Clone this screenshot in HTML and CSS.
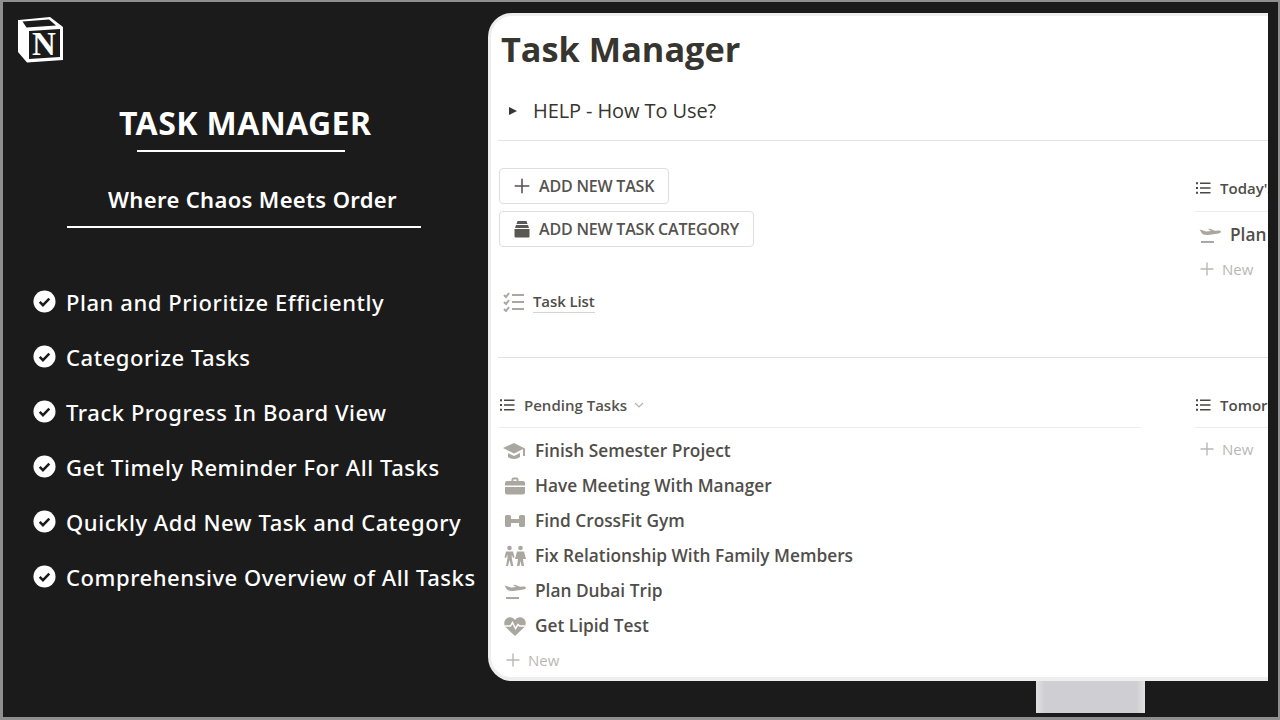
FILE: index.html
```html
<!DOCTYPE html>
<html lang="en">
<head>
<meta charset="utf-8">
<title>Task Manager</title>
<link rel="stylesheet" href="styles.css">
</head>
<body>
<svg class="defs" width="0" height="0" aria-hidden="true">
  <defs>
    <symbol id="i-check" viewBox="0 0 24 24">
      <circle cx="12" cy="12" r="11.5" fill="#fff"/>
      <path d="M7 12.4l3.4 3.4L17 9" fill="none" stroke="#1b1b1b" stroke-width="2.6"/>
    </symbol>
    <symbol id="i-list" viewBox="0 0 16 16">
      <path d="M1 2.2h2v2H1zM1 7h2v2H1zM1 11.8h2v2H1zM5 2.5h10.5v1.4H5zM5 7.3h10.5v1.4H5zM5 12.1h10.5v1.4H5z" fill="#4a4843"/>
    </symbol>
    <symbol id="i-plus" viewBox="0 0 16 16">
      <path d="M8 1.5v13M1.5 8h13" fill="none" stroke="currentColor" stroke-width="1.4"/>
    </symbol>
    <symbol id="i-plane" viewBox="0 0 24 24">
      <path d="M1.500 6.500l3 .8 3.500 1.200 5-.6-3-2 2-.2 5 2 3.500-.3c1.500 0 2.500.6 2.500 1.300 0 1-2 1.800-4 2l-9 1.200c-3 .2-6-.5-6.500-2.200z" fill="#a9a79f"/>
      <path d="M3 19h13" stroke="#a9a79f" stroke-width="2.200" fill="none"/>
    </symbol>
  </defs>
</svg>
<main class="frame">
  <section class="promo">
    <svg class="logo" viewBox="0 0 46 46" aria-hidden="true">
      <path d="M1 3 32 0l13 10v33l-36 2.500L0 35V3z" fill="#fff"/>
      <path d="M11 14 42 12v28l-31 2z" fill="#1b1b1b"/>
      <path d="M4.500 4.500 8.500 10.500 38 8.500 31 2.500z" fill="#1b1b1b"/>
      <text x="26" y="38" text-anchor="middle" class="logo-n">N</text>
    </svg>
    <h1 class="promo-title">TASK MANAGER</h1>
    <div class="rule rule-short"></div>
    <p class="promo-sub">Where Chaos Meets Order</p>
    <div class="rule rule-long"></div>
    <ul class="features">
      <li><svg class="check"><use href="#i-check"/></svg>Plan and Prioritize Efficiently</li>
      <li><svg class="check"><use href="#i-check"/></svg>Categorize Tasks</li>
      <li><svg class="check"><use href="#i-check"/></svg>Track Progress In Board View</li>
      <li><svg class="check"><use href="#i-check"/></svg>Get Timely Reminder For All Tasks</li>
      <li><svg class="check"><use href="#i-check"/></svg>Quickly Add New Task and Category</li>
      <li><svg class="check"><use href="#i-check"/></svg>Comprehensive Overview of All Tasks</li>
    </ul>
  </section>
  <section class="monitor">
    <div class="panel">
      <h2 class="page-title">Task Manager</h2>
      <div class="toggle"><span class="caret"></span>HELP - How To Use?</div>
      <hr class="divider divider-help">
      <div class="columns columns-top">
        <div class="col-left">
          <button class="btn"><svg class="btn-icon btn-plus"><use href="#i-plus"/></svg>ADD NEW TASK</button>
          <button class="btn"><svg class="btn-icon" viewBox="0 0 18 18"><path d="M4.500 1h9l1 3h-11zM3 5h12l1 3H2zM1.500 9h15v7.500a1 1 0 0 1-1 1h-13a1 1 0 0 1-1-1z" fill="#5a5852"/></svg>ADD NEW TASK CATEGORY</button>
          <div class="link-row">
            <svg class="link-icon" viewBox="0 0 22 20"><path d="M1 3l2 2 3-4M1 10l2 2 3-4M1 17l2 2 3-4" fill="none" stroke="#a9a79f" stroke-width="2"/><path d="M9 3h12M9 10h12M9 17h12" stroke="#a9a79f" stroke-width="2"/></svg>
            <span class="link-text">Task List</span>
          </div>
        </div>
        <div class="col-right">
          <div class="view-head view-head-right"><svg class="list-icon"><use href="#i-list"/></svg>Today's Tasks</div>
          <div class="task task-right"><svg class="task-icon"><use href="#i-plane"/></svg>Plan Dubai Trip</div>
          <div class="new new-right"><svg class="new-icon"><use href="#i-plus"/></svg>New</div>
        </div>
      </div>
      <hr class="divider divider-mid">
      <div class="columns">
        <div class="col-left">
          <div class="view-head"><svg class="list-icon"><use href="#i-list"/></svg>Pending Tasks<svg class="chev" viewBox="0 0 12 12"><path d="M2 4l4 4 4-4" fill="none" stroke="#b5b3ad" stroke-width="1.200"/></svg></div>
          <div class="tasks">
            <div class="task"><svg class="task-icon" viewBox="0 0 24 24"><path d="M11 4 0 9l11 5.500 9-4.500v7h2V9.500z" fill="#a9a79f"/><path d="M5 14v4c3 2.500 9 2.500 12 0v-4l-6 3z" fill="#a9a79f"/></svg>Finish Semester Project</div>
            <div class="task"><svg class="task-icon" viewBox="0 0 24 24"><path d="M8.500 7V5.500C8.500 4.200 9.500 3.500 10.500 3.500h3c1 0 2 .7 2 2V7h4.500A2 2 0 0 1 22 9v2.500H2V9a2 2 0 0 1 2-2zM10.300 7h3.400V5.400h-3.400zM2 13h20v5.500a2 2 0 0 1-2 2H4a2 2 0 0 1-2-2z" fill="#a9a79f"/></svg>Have Meeting With Manager</div>
            <div class="task"><svg class="task-icon" viewBox="0 0 24 24"><path d="M2 7.500A1.500 1.500 0 0 1 3.500 6h3A1.500 1.500 0 0 1 8 7.500v2.500h8V7.500A1.500 1.500 0 0 1 17.500 6h3A1.500 1.500 0 0 1 22 7.500v9a1.500 1.500 0 0 1-1.500 1.500h-3a1.500 1.500 0 0 1-1.500-1.500V14H8v2.500A1.500 1.500 0 0 1 6.500 18h-3A1.500 1.500 0 0 1 2 16.500z" fill="#a9a79f"/></svg>Find CrossFit Gym</div>
            <div class="task"><svg class="task-icon" viewBox="0 0 24 24"><circle cx="6.500" cy="4" r="2.300" fill="#a9a79f"/><circle cx="17.500" cy="4" r="2.300" fill="#a9a79f"/><path d="M3 7.500h7l1.500 6-1.500.5-1.200-3.500V14l1.500 8H8l-1.500-6L5 22H3l1.500-8v-3.500L3 14l-1.500-.5zM14 7.500h7l2 7.500h-3l1 7h-2.500l-1-5-1 5H14l1-7h-3z" fill="#a9a79f"/></svg>Fix Relationship With Family Members</div>
            <div class="task"><svg class="task-icon"><use href="#i-plane"/></svg>Plan Dubai Trip</div>
            <div class="task"><svg class="task-icon" viewBox="0 0 24 24"><path d="M12 22 3 13.500C.5 11 .8 6.500 3.500 4.500 6.500 2.300 10 3.300 12 6c2-2.700 5.500-3.700 8.500-1.500 2.700 2 3 6.500.5 9z" fill="#a9a79f"/><path d="M1.500 12h6l2-3.500 3 6 2.500-4 1.500 1.500h6" fill="none" stroke="#fff" stroke-width="1.500"/></svg>Get Lipid Test</div>
          </div>
          <div class="new new-left"><svg class="new-icon"><use href="#i-plus"/></svg>New</div>
        </div>
        <div class="col-right">
          <div class="view-head view-head-right view-head-tomorrow"><svg class="list-icon"><use href="#i-list"/></svg>Tomorrow's Tasks</div>
          <div class="new new-right new-tomorrow"><svg class="new-icon"><use href="#i-plus"/></svg>New</div>
        </div>
      </div>
    </div>
    <div class="stand"></div>
  </section>
</main>
</body>
</html>
```
FILE: styles.css
```css
* { box-sizing: border-box; }
html, body { margin: 0; height: 720px; overflow: hidden; }
body { background: #8f8f8f; }
.defs { position: absolute; }
.frame {
  display: flex;
  width: 1275px;
  height: 715px;
  margin: 2px 0 0 3px;
  background: #1b1b1b;
  color: #fff;
  font-family: "Noto Sans", sans-serif;
}
.promo { width: 485px; flex: none; padding-top: 15px; }
.logo { display: block; width: 46px; height: 46px; margin-left: 15px; }
.logo-n { font-family: "Liberation Serif", serif; font-weight: 700; font-size: 33px; fill: #fff; }
.promo-title {
  margin: 39px 0 0 116px;
  font-size: 32px;
  line-height: 42px;
  font-weight: 700;
  letter-spacing: .4px;
  white-space: nowrap;
}
.rule { height: 2px; background: #fff; }
.rule-short { width: 208px; margin: 6px 0 0 134px; }
.promo-sub {
  margin: 31px 0 0 105px;
  font-size: 22px;
  line-height: 32px;
  font-weight: 600;
  letter-spacing: .35px;
}
.rule-long { width: 354px; margin: 11px 0 0 64px; }
.features { list-style: none; margin: 46px 0 0; padding: 0 0 0 30px; }
.features li {
  display: flex;
  align-items: center;
  height: 55px;
  font-size: 22px;
  font-weight: 500;
  letter-spacing: .56px;
  white-space: nowrap;
}
.check { width: 23px; height: 23px; margin: 0 10px 0 0; flex: none; }

.monitor { width: 780px; flex: none; }
.panel {
  height: 668px;
  margin-top: 11px;
  padding: 0 0 0 7px;
  background: #fff;
  border: 3px solid #eeeeee;
  border-right: 0;
  border-bottom-width: 4px;
  border-radius: 24px 0 0 24px;
  overflow: hidden;
  color: #37352f;
  font-family: "Open Sans", sans-serif;
}
.page-title {
  margin: 9px 0 0 3px;
  font-size: 34.3px;
  line-height: 48px;
  font-weight: 700;
  white-space: nowrap;
}
.toggle {
  display: flex;
  align-items: center;
  margin-top: 23px;
  font-size: 20px;
  line-height: 30px;
  letter-spacing: -.1px;
  padding-left: 11px;
}
.caret {
  width: 0;
  height: 0;
  margin-right: 16px;
  border-left: 8px solid #37352f;
  border-top: 4px solid transparent;
  border-bottom: 4px solid transparent;
}
.divider { margin: 0; border: 0; height: 1px; background: #e3e2e0; }
.divider-help { margin-top: 14px; }
.columns { display: flex; }
.columns-top { height: 216px; }
.col-left { width: 643px; flex: none; }
.col-right { margin-left: 53px; width: 200px; flex: none; white-space: nowrap; }
.btn {
  display: flex;
  align-items: center;
  margin: 7px 0 0 1px;
  height: 36px;
  padding: 0 14px 0 13px;
  background: #fff;
  border: 1px solid #dfdedb;
  border-radius: 4px;
  font: 600 16px "Open Sans", sans-serif;
  letter-spacing: -.2px;
  color: #55534e;
}
.btn:first-child { margin-top: 27px; }
.btn-icon { width: 18px; height: 18px; margin-right: 8px; color: #55534e; }
.btn-plus { stroke-width: 1; }
.link-row { display: flex; align-items: center; margin: 44px 0 0 5px; }
.link-icon { width: 22px; height: 20px; margin-right: 8px; }
.link-text {
  font-size: 15px;
  line-height: 21px;
  font-weight: 600;
  letter-spacing: -.1px;
  color: #4f4d48;
  border-bottom: 1px solid #d5d4d1;
}
.view-head {
  display: flex;
  align-items: center;
  height: 43px;
  margin-top: 27px;
  padding: 0 0 3px 1px;
  border-bottom: 1px solid #eeeeed;
  font-size: 15px;
  font-weight: 600;
  color: #55534e;
}
.view-head-right { margin-top: 25px; color: #4f4d48; height: 46px; padding-bottom: 1px; }
.view-head-tomorrow { margin-top: 26px; height: 44px; padding-bottom: 2px; }
.list-icon { width: 16px; height: 16px; margin-right: 9px; flex: none; }
.chev { width: 12px; height: 12px; margin-left: 6px; }
.tasks { margin-top: 5px; }
.task {
  display: flex;
  align-items: center;
  height: 35px;
  padding-left: 5px;
  font-size: 17.3px;
  font-weight: 600;
  color: #504e49;
  white-space: nowrap;
}
.task-right { margin-top: 5px; padding-left: 4px; }
.task-icon { width: 24px; height: 24px; margin-right: 8px; flex: none; }
.new {
  display: flex;
  align-items: center;
  height: 35px;
  padding-left: 7px;
  font-size: 15px;
  color: #b9b8b4;
}
.new-left { height: 33px; }
.new-right { padding-left: 5px; height: 33px; }
.new-tomorrow { margin-top: 4px; }
.new-icon { width: 16px; height: 16px; margin-right: 7px; color: #b9b8b4; }
.stand {
  width: 109px;
  height: 32px;
  margin-left: 548px;
  background: linear-gradient(90deg, #e2e2e4, #cfcfd3 8%, #cfcfd3 92%, #e2e2e4);
}
```
